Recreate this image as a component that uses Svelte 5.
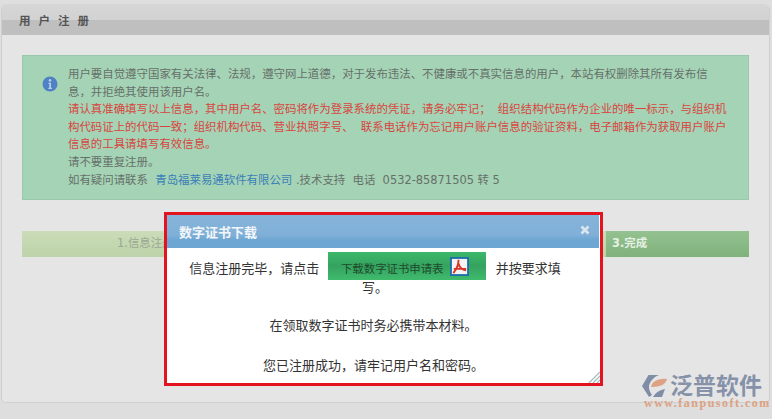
<script>
	const steps = ['1.信息注册', '', '3.完成'];
</script>

<div class="page">
	<section class="panel">
		<header class="panel-head"><h2>用户注册</h2></header>
		<div class="panel-body">
			<div class="notice">
				<svg class="info" viewBox="0 0 16 16" width="16" height="16" aria-hidden="true">
					<circle cx="8" cy="8" r="7.5" fill="#4f81c4" />
					<circle cx="8" cy="4.4" r="1.3" fill="#b9cde6" />
					<path d="M6.4 6.7h2.6v5h1v1.2H6.3v-1.2h1V7.9h-.9z" fill="#b9cde6" />
				</svg>
				<div class="notice-text">
					<p>用户要自觉遵守国家有关法律、法规，遵守网上道德，对于发布违法、不健康或不真实信息的用户，本站有权删除其所有发布信<br />息，并拒绝其使用该用户名。</p>
					<p class="warn">请认真准确填写以上信息，其中用户名、密码将作为登录系统的凭证，请务必牢记；&nbsp; 组织结构代码作为企业的唯一标示，与组织机构代码证上的代码一致；组织机构代码、营业执照字号、&nbsp; 联系电话作为忘记用户账户信息的验证资料，电子邮箱作为获取用户账户信息的工具请填写有效信息。</p>
					<p>请不要重复注册。</p>
					<p>如有疑问请联系&nbsp; <a href="#top">青岛福莱易通软件有限公司</a> .技术支持&nbsp; 电话&nbsp; 0532-85871505 转 5</p>
				</div>
			</div>
			<div class="steps">
				{#each steps as step, i}
					<div class="step" class:done={i === 2}>{step}</div>
				{/each}
			</div>
		</div>
	</section>

	<div class="modal-frame">
		<div class="modal">
			<div class="modal-head">
				<span>数字证书下载</span>
				<svg class="close" viewBox="0 0 10 10" width="10" height="10" aria-hidden="true">
					<path d="M1.500 1.500l7 7M8.500 1.500l-7 7" stroke="#dbe6ee" stroke-width="2.600" />
				</svg>
			</div>
			<div class="modal-body">
				<p class="first">
					信息注册完毕，请点击
					<a class="download" href="#top">
						<span class="download-label">下载数字证书申请表</span>
						<svg viewBox="0 0 20 20" width="19" height="19" aria-hidden="true">
							<rect x="1" y="1" width="18" height="18" fill="#f4f4f4" stroke="#1f6fa8" stroke-width="2" />
							<path d="M3.500 17C7 13 9 8 9 3M4 12.500h13M9 7c1 4 3 6 8 7" fill="none" stroke="#d8342a" stroke-width="2" />
						</svg>
					</a>
					并按要求填写。
				</p>
				<p class="second">在领取数字证书时务必携带本材料。</p>
				<p class="third">您已注册成功，请牢记用户名和密码。</p>
			</div>
			<svg class="grip" viewBox="0 0 12 12" width="12" height="12" aria-hidden="true">
				<path d="M12 1 1 12M12 5 5 12M12 9 9 12" stroke="#9fb8bd" stroke-width="1.200" />
			</svg>
		</div>
	</div>

	<div class="brand">
		<div class="brand-top">
			<svg viewBox="0 0 26 24" width="26" height="24" aria-hidden="true">
				<path d="M0 12 6.500 1H17C12 3 8 7 7 12c-.5 3 1 6 3 9l-3 2z" fill="#7f8ea6" />
				<path d="M9 13c1-5 6-9 16-8-1 5-6 8-16 8z" fill="#dca283" />
				<path d="M11 23c3-5 7-7 12-8l-3 8z" fill="#7f8ea6" />
			</svg>
			<span>泛普软件</span>
		</div>
		<div class="brand-url">www.fanpusoft.com</div>
	</div>
</div>

<style>
	:global(body) {
		margin: 0;
		background: #dedede;
	}

	.page {
		position: relative;
		width: 772px;
		height: 419px;
		padding: 4px 2px 0 1px;
		box-sizing: border-box;
		overflow: hidden;
		font-family: 'DejaVu Sans', 'Noto Sans CJK SC', sans-serif;
		font-size: 11.43px;
		color: #666;
	}

	.panel {
		height: 399px;
		box-sizing: border-box;
		background: #e5e5e5;
		border: 1px solid #cfcfcf;
		border-top: 0;
		border-radius: 5px;
	}

	.panel-head {
		height: 31px;
		box-sizing: border-box;
		padding-left: 17px;
		display: flex;
		align-items: center;
		border-radius: 5px 5px 0 0;
		background: linear-gradient(#d6d6d6 0, #d2d2d2 50%, #bfbfbf 52%, #bfbfbf 100%);
	}

	h2 {
		margin: 0;
		font-size: 11.500px;
		font-weight: bold;
		letter-spacing: 8px;
		color: #555;
	}

	.panel-body {
		padding: 20px 20px 0 20px;
	}

	.notice {
		display: flex;
		height: 145px;
		box-sizing: border-box;
		padding: 10px 20px 0 19px;
		background: #a5d3b5;
		border: 1px solid #98c9aa;
	}

	.info {
		flex: none;
		margin: 10px 10px 0 0;
	}

	.notice-text {
		width: 660px;
		flex: none;
		line-height: 17.600px;
		color: #66706a;
	}

	p {
		margin: 0;
	}

	.warn {
		color: #d8453f;
	}

	.notice-text a {
		color: #3a7fb8;
		text-decoration: none;
	}

	.steps {
		display: flex;
		margin-top: 31px;
		height: 26px;
	}

	.step {
		flex: 1;
		padding-left: 95px;
		line-height: 24px;
		color: #9aa793;
		background: linear-gradient(#cadcb8, #bdd3a9);
	}

	.step.done {
		padding-left: 0;
		text-indent: 6px;
		flex: 0 0 143px;
		font-weight: bold;
		color: #e6f0e2;
		background: linear-gradient(#93c290, #80b27d);
	}

	.modal-frame {
		position: absolute;
		left: 164px;
		top: 212px;
		width: 439px;
		height: 174px;
		box-sizing: border-box;
		border: 3px solid #e3141f;
		background: #fff;
	}

	.modal {
		position: relative;
		height: 100%;
	}

	.modal-head {
		height: 33px;
		margin-right: 1px;
		padding: 0 9px 0 12px;
		display: flex;
		align-items: center;
		justify-content: space-between;
		color: #f2f6fa;
		font-size: 13px;
		font-weight: bold;
		background: linear-gradient(#86b4d9 0, #80b0d8 60%, #6ea6d3 75%, #6ea6d3 100%);
	}

	.close {
		margin-bottom: 3px;
	}

	.modal-body {
		padding-right: 20px;
		text-align: center;
		color: #333;
		font-size: 13px;
		line-height: 16px;
	}

	.first {
		width: 380px;
		padding-left: 3px;
		margin: 4px auto 0;
	}

	.download {
		display: inline-flex;
		align-items: center;
		justify-content: flex-end;
		gap: 6px;
		width: 158px;
		height: 28px;
		margin: 0 6px 0 4px;
		padding-right: 17px;
		box-sizing: border-box;
		background: linear-gradient(#3cb86a, #35a25f 50%, #3fbb6d);
		color: #1d4a2a;
		font-size: 11.400px;
		text-decoration: none;
	}

	.download-label {
		margin-top: 5px;
	}

	.second {
		margin-top: 22px;
	}

	.third {
		margin-top: 24px;
	}

	.grip {
		position: absolute;
		right: 0;
		bottom: 0;
	}

	.brand {
		position: absolute;
		left: 642px;
		top: 374px;
		color: #8592a9;
	}

	.brand-top {
		display: flex;
		align-items: center;
		gap: 2px;
		font-size: 23px;
		line-height: 24px;
		font-weight: bold;
		white-space: nowrap;
		width: 130px;
	}

	.brand-url {
		margin-left: 2px;
		font-family: 'Liberation Serif', serif;
		font-size: 12px;
		line-height: 11px;
		font-weight: bold;
		letter-spacing: 1.500px;
		color: #dca283;
		white-space: nowrap;
	}
</style>
